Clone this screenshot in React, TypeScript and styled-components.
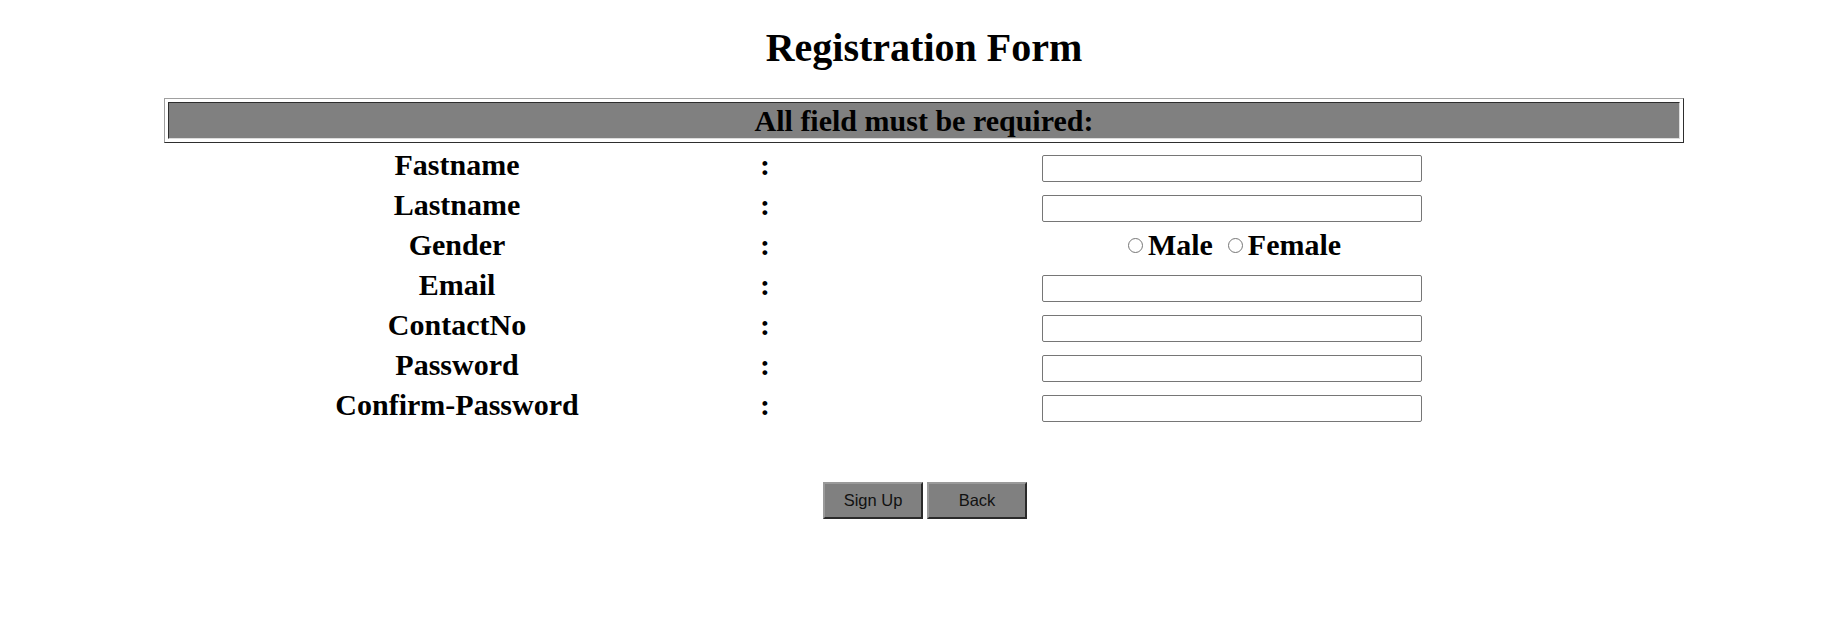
import React from "react";
import styled, { createGlobalStyle } from "styled-components";

const GlobalStyle = createGlobalStyle`
  html, body {
    margin: 0;
    padding: 0;
    background: #ffffff;
  }
  body {
    font-family: "Liberation Serif", "Times New Roman", serif;
    color: #000000;
  }
`;

const Page = styled.div`
  padding: 8px 8px 8px 19px;
  min-height: 621px;
  box-sizing: border-box;
`;

const Title = styled.h1`
  margin: 16px 0 27px;
  text-align: center;
  font-size: 40px;
  font-weight: bold;
  line-height: normal;
`;

const Frame = styled.div`
  width: 1520px;
  margin: 0 auto;
`;

const Notice = styled.div`
  box-sizing: border-box;
  width: 100%;
  padding: 3px;
  border: 1px solid;
  border-color: #a0a0a0 #2e2e2e #2e2e2e #a0a0a0;
`;

const NoticeCell = styled.div`
  background: #808080;
  border: 1px solid;
  border-color: #2e2e2e #dcdcdc #dcdcdc #2e2e2e;
  text-align: center;
  font-size: 30px;
  font-weight: bold;
  line-height: 35px;
  height: 35px;
`;

const FormGrid = styled.div`
  display: grid;
  grid-template-columns: 586px 30px 904px;
  grid-auto-rows: 40px;
  margin-top: 5px;
`;

const Label = styled.div`
  text-align: center;
  font-size: 30px;
  font-weight: bold;
  line-height: normal;
  white-space: nowrap;
`;

const Colon = styled(Label)``;

const FieldCell = styled.div`
  display: flex;
  justify-content: center;
  align-items: center;
`;

const GenderCell = styled.div`
  display: flex;
  justify-content: center;
  align-items: flex-start;
`;

const TextInput = styled.input`
  box-sizing: border-box;
  width: 380px;
  height: 27px;
  border: 1px solid #767676;
  border-radius: 2px;
  padding: 1px 3px;
  font-size: 16px;
  background: #ffffff;
  margin: 0;
`;

const RadioOption = styled.label<{ $first?: boolean }>`
  display: flex;
  align-items: center;
  height: 34px;
  font-size: 30px;
  font-weight: bold;
  line-height: normal;
  margin-left: ${(p) => (p.$first ? "0" : "10px")};
`;

const Radio = styled.input`
  appearance: none;
  box-sizing: border-box;
  width: 15px;
  height: 15px;
  margin: 0 5px 0 5px;
  border: 1px solid #767676;
  border-radius: 50%;
  background: #ffffff;
`;

const Actions = styled.div`
  display: flex;
  justify-content: center;
  gap: 4px;
  margin-top: 54px;
  padding-left: 2px;
`;

const Button = styled.button`
  box-sizing: border-box;
  width: 100px;
  height: 37px;
  background: #808080;
  border: 2px solid;
  border-color: #9a9a9a #2a2a2a #2a2a2a #9a9a9a;
  font-family: "Liberation Sans", Arial, sans-serif;
  font-size: 16.5px;
  color: #111111;
  padding: 0;
`;

type Field = { label: string; kind: "text" | "gender" };

const fields: Field[] = [
  { label: "Fastname", kind: "text" },
  { label: "Lastname", kind: "text" },
  { label: "Gender", kind: "gender" },
  { label: "Email", kind: "text" },
  { label: "ContactNo", kind: "text" },
  { label: "Password", kind: "text" },
  { label: "Confirm-Password", kind: "text" },
];

export default function App() {
  return (
    <>
      <GlobalStyle />
      <Page>
        <Title>Registration Form</Title>
        <Frame>
          <Notice>
            <NoticeCell>All field must be required:</NoticeCell>
          </Notice>
          <FormGrid>
            {fields.map((f) => (
              <React.Fragment key={f.label}>
                <Label>{f.label}</Label>
                <Colon>:</Colon>
                {f.kind === "text" ? (
                  <FieldCell>
                    <TextInput type="text" />
                  </FieldCell>
                ) : (
                  <GenderCell>
                    <RadioOption $first>
                      <Radio type="radio" name="gender" />
                      Male
                    </RadioOption>
                    <RadioOption>
                      <Radio type="radio" name="gender" />
                      Female
                    </RadioOption>
                  </GenderCell>
                )}
              </React.Fragment>
            ))}
          </FormGrid>
          <Actions>
            <Button type="button">Sign Up</Button>
            <Button type="button">Back</Button>
          </Actions>
        </Frame>
      </Page>
    </>
  );
}
